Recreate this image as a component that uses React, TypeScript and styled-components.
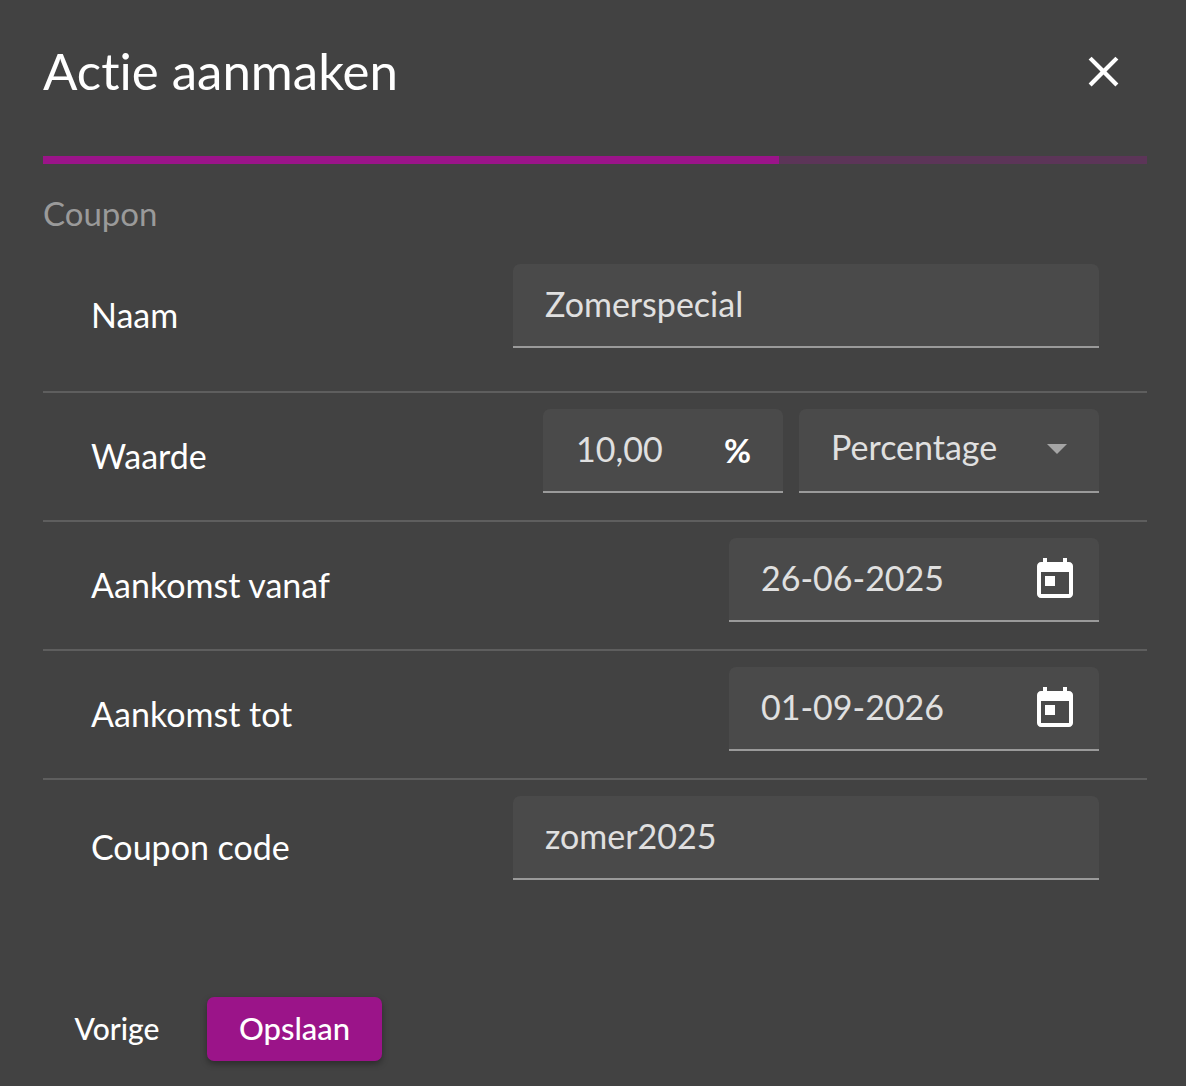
import React from 'react';
import styled, { createGlobalStyle } from 'styled-components';

const GlobalStyle = createGlobalStyle`
  html, body {
    margin: 0;
    background: #424242;
    font-family: 'Lato', 'Liberation Sans', sans-serif;
    font-variant-ligatures: none;
  }
`;

const Dialog = styled.div`
  box-sizing: border-box;
  width: 1186px;
  height: 1086px;
  padding: 0 39px 25px 43px;
  display: flex;
  flex-direction: column;
  overflow: hidden;
  color: #fff;
`;

const Header = styled.div`
  height: 156px;
  display: flex;
  align-items: flex-start;
  justify-content: space-between;
`;

const Title = styled.h2`
  margin: 40px 0 0;
  font-size: 51px;
  line-height: 62px;
  font-weight: 400;
`;

const CloseButton = styled.button`
  margin: 46px 18px 0 0;
  padding: 0;
  width: 51px;
  height: 51px;
  border: 0;
  background: none;
  color: #fff;
  cursor: pointer;
`;

const Progress = styled.div`
  height: 8px;
  flex: none;
  background: #5c3558;
`;

const ProgressFill = styled.div<{ $value: number }>`
  height: 100%;
  width: ${(props) => props.$value}%;
  background: #9b1489;
`;

const SectionTitle = styled.div`
  margin-top: 31px;
  height: 38px;
  font-size: 33px;
  line-height: 37px;
  color: #9a9a9a;
  font-weight: 400;
`;

const Row = styled.div<{ $first?: boolean; $last?: boolean }>`
  display: flex;
  align-items: flex-start;
  justify-content: space-between;
  height: ${(props) => (props.$first ? 127 : 111)}px;
  padding: ${(props) => (props.$first ? 31 : 16)}px 48px 0;
  border-bottom: ${(props) => (props.$last ? '0' : '2px solid #5e5e5e')};
`;

const Label = styled.div<{ $offset: number }>`
  margin-top: ${(props) => props.$offset}px;
  font-size: 34px;
  line-height: 40px;
  color: #fff;
`;

const Fields = styled.div`
  display: flex;
  gap: 16px;
`;

const Field = styled.div<{ $width: number; $inset?: number }>`
  box-sizing: border-box;
  width: ${(props) => props.$width}px;
  height: 84px;
  padding: 0 20px 0 ${(props) => props.$inset ?? 32}px;
  display: flex;
  align-items: center;
  justify-content: space-between;
  background: #4a4a4a;
  border-bottom: 2px solid #9a9a9a;
  border-radius: 7px 7px 0 0;
  font-size: 34px;
  color: #e0e0e0;
`;

const Value = styled.span<{ $lift?: number }>`
  position: relative;
  top: -${(props) => props.$lift ?? 2}px;
`;

const Unit = styled.span`
  color: #fff;
  margin-right: 12px;
  font-weight: 700;
  font-size: 33px;
`;

const Footer = styled.div`
  margin-top: auto;
  display: flex;
  align-items: center;
  gap: 16px;
`;

const TextButton = styled.button`
  width: 148px;
  height: 64px;
  padding: 0 0 2px;
  border: 0;
  background: none;
  color: #fff;
  font: 500 30px 'Lato', 'Liberation Sans', sans-serif;
  cursor: pointer;
`;

const SaveButton = styled.button`
  width: 175px;
  height: 64px;
  padding: 0 0 2px;
  border: 0;
  border-radius: 7px;
  background: #9b1489;
  color: #fff;
  font: 500 31px 'Lato', 'Liberation Sans', sans-serif;
  box-shadow: 0 3px 6px rgba(0, 0, 0, 0.35);
  cursor: pointer;
`;

const TodayIcon = styled.svg`
  width: 48px;
  height: 48px;
  flex: none;
  fill: #fff;
  position: relative;
  top: 1px;
`;

const ArrowIcon = styled.svg`
  width: 48px;
  height: 48px;
  flex: none;
  fill: #a5a5a5;
  position: relative;
  top: -2px;
  margin-right: -2px;
`;

const Today: React.FC = () => (
  <TodayIcon viewBox="0 0 24 24">
    <path d="M19 3h-1V1h-2v2H8V1H6v2H5c-1.11 0-1.99.9-1.99 2L3 19c0 1.1.89 2 2 2h14c1.1 0 2-.9 2-2V5c0-1.1-.9-2-2-2zm0 16H5V8h14v11zM7 10h5v5H7z" />
  </TodayIcon>
);

const App: React.FC = () => {
  return (
    <>
      <GlobalStyle />
      <Dialog>
        <Header>
          <Title>Actie aanmaken</Title>
          <CloseButton aria-label="Sluiten">
            <svg viewBox="0 0 24 24" width="51" height="51" fill="currentColor">
              <path d="M19 6.41L17.59 5 12 10.59 6.41 5 5 6.41 10.59 12 5 17.59 6.41 19 12 13.41 17.59 19 19 17.59 13.41 12z" />
            </svg>
          </CloseButton>
        </Header>
        <Progress>
          <ProgressFill $value={66.67} />
        </Progress>
        <SectionTitle>Coupon</SectionTitle>

        <Row $first>
          <Label $offset={31}>Naam</Label>
          <Field $width={586}>
            <Value>Zomerspecial</Value>
          </Field>
        </Row>
        <Row>
          <Label $offset={27}>Waarde</Label>
          <Fields>
            <Field $width={240} $inset={33}>
              <Value>10,00</Value>
              <Unit>%</Unit>
            </Field>
            <Field $width={300}>
              <Value $lift={4}>Percentage</Value>
              <ArrowIcon viewBox="0 0 24 24">
                <path d="M7 10l5 5 5-5z" />
              </ArrowIcon>
            </Field>
          </Fields>
        </Row>
        <Row>
          <Label $offset={27}>Aankomst vanaf</Label>
          <Field $width={370}>
            <Value>26-06-2025</Value>
            <Today />
          </Field>
        </Row>
        <Row>
          <Label $offset={27}>Aankomst tot</Label>
          <Field $width={370}>
            <Value>01-09-2026</Value>
            <Today />
          </Field>
        </Row>
        <Row $last>
          <Label $offset={31}>Coupon code</Label>
          <Field $width={586}>
            <Value>zomer2025</Value>
          </Field>
        </Row>

        <Footer>
          <TextButton>Vorige</TextButton>
          <SaveButton>Opslaan</SaveButton>
        </Footer>
      </Dialog>
    </>
  );
};

export default App;
